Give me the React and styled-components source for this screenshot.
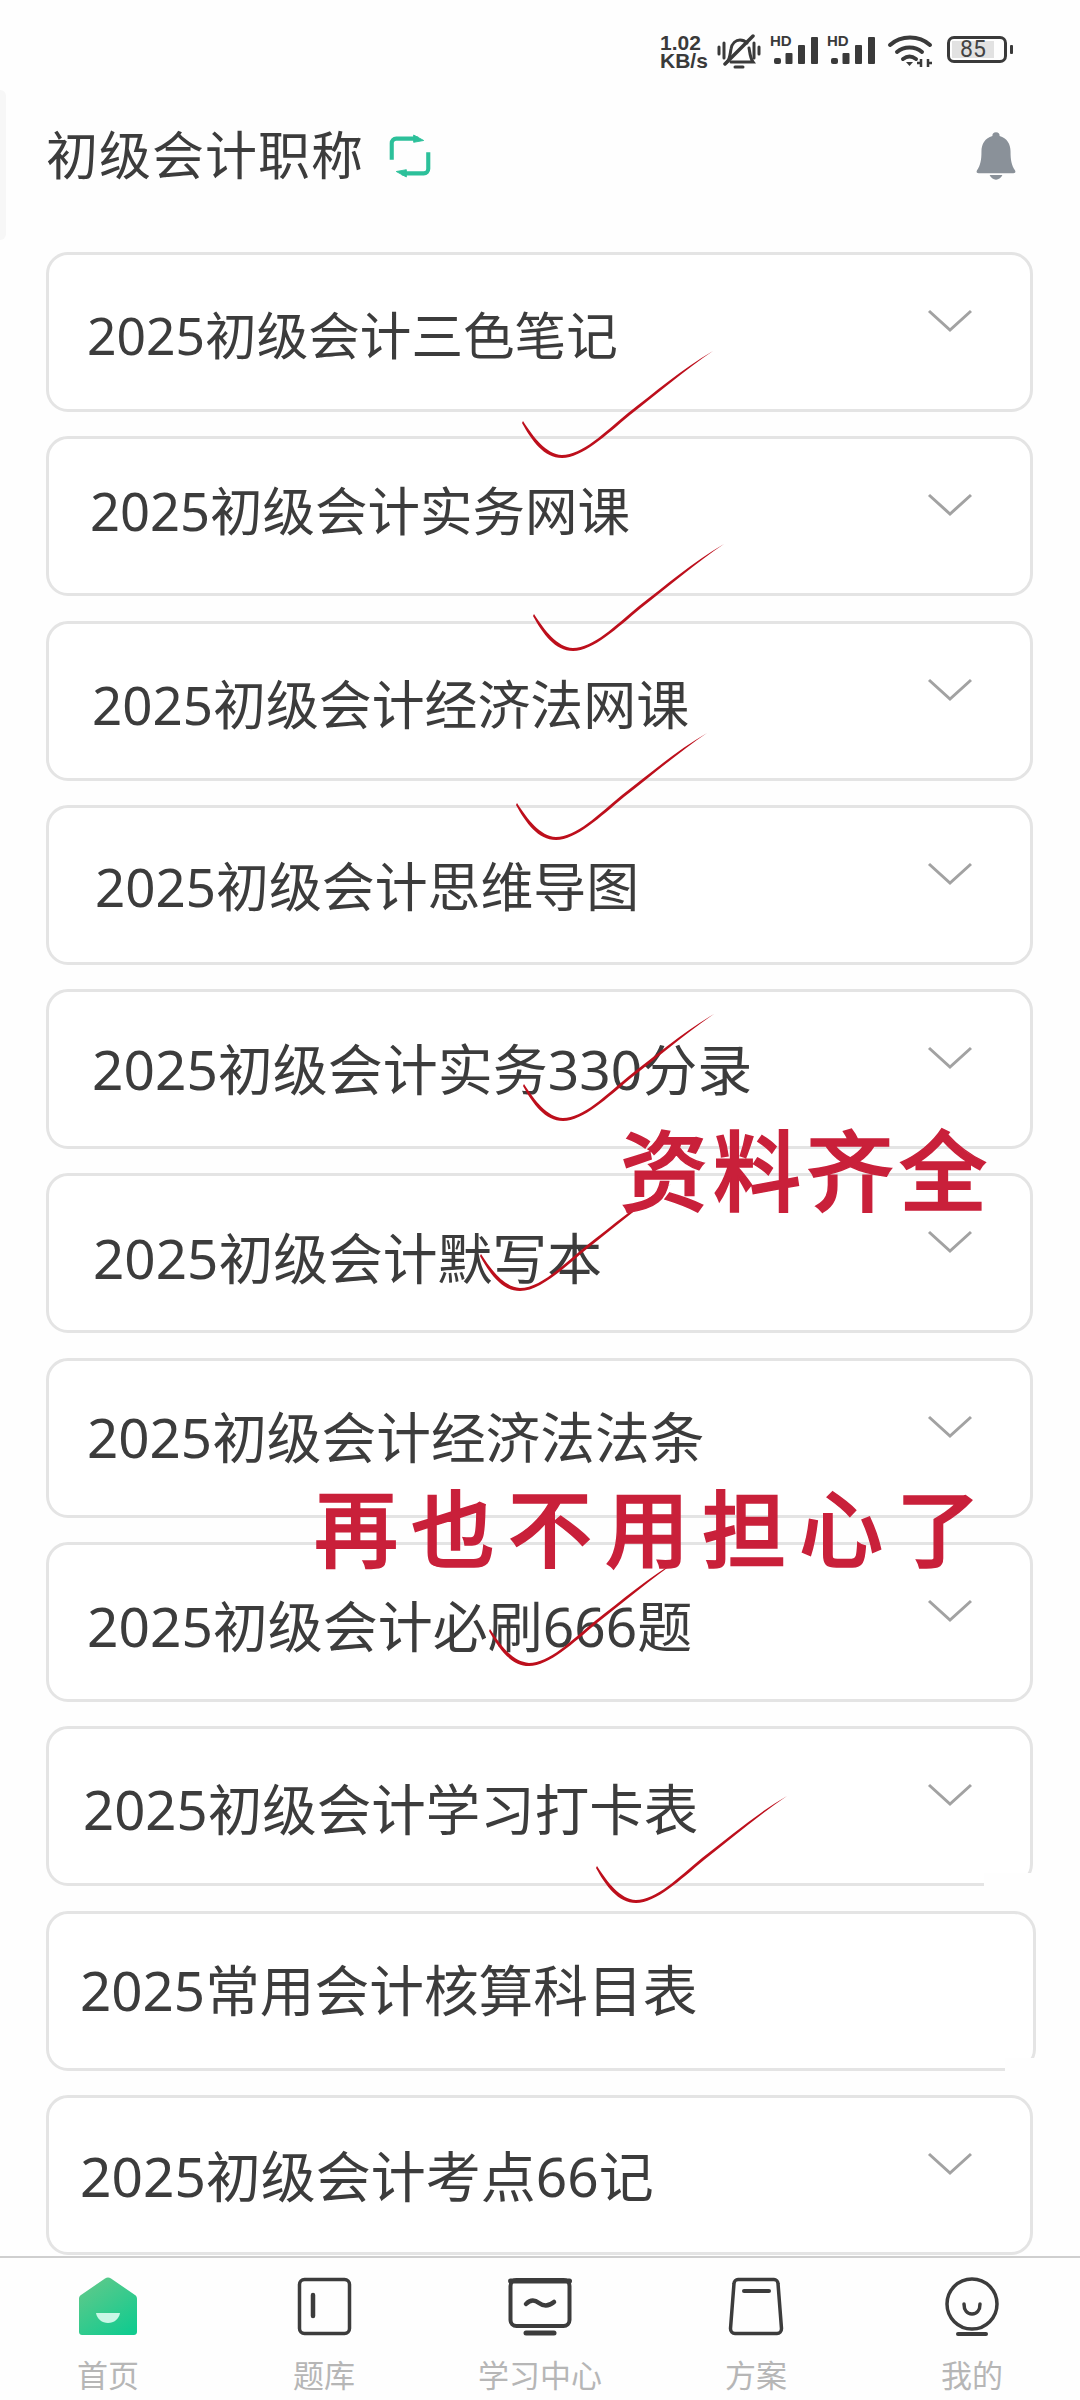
import React from "react";
import styled, { createGlobalStyle } from "styled-components";

const GlobalStyle = createGlobalStyle`
  html, body {
    margin: 0;
    padding: 0;
    background: #fff;
  }
  * {
    box-sizing: border-box;
  }
`;

const Page = styled.div`
  position: relative;
  width: 1080px;
  height: 2400px;
  overflow: hidden;
  display: flex;
  flex-direction: column;
  background: #fefefe;
  color: #3c3c3c;
  font-family: "Noto Sans", "Noto Sans CJK SC", sans-serif;
`;

// Status bar
const StatusBar = styled.div`
  height: 100px;
  padding: 34px 67px 0 0;
  display: flex;
  justify-content: flex-end;
  align-items: flex-start;
`;

const NetSpeed = styled.div`
  width: 57px;
  font-family: "Liberation Sans", sans-serif;
  font-weight: 700;
  font-size: 21px;
  line-height: 18px;
  color: #3a3a3a;
`;

const StatusIcon = styled.svg`
  display: block;
  flex: none;
  margin-left: ${(p) => p.$gap || 0}px;
`;

const Signal = styled.div`
  position: relative;
  flex: none;
  width: 49px;
  height: 32px;
  margin-left: ${(p) => p.$gap}px;
`;

const HdLabel = styled.span`
  position: absolute;
  left: 0;
  top: 0;
  font-family: "Liberation Sans", sans-serif;
  font-weight: 700;
  font-size: 15px;
  line-height: 14px;
  color: #3a3a3a;
`;

const Battery = styled.div`
  display: flex;
  align-items: center;
  margin-left: 14px;
  margin-top: 2px;
`;

const BatteryShell = styled.div`
  width: 60px;
  height: 27px;
  border: 3px solid #3a3a3a;
  border-radius: 7px;
  padding: 2px;
  display: flex;
`;

const BatteryFill = styled.div`
  width: 42px;
  background: #e2e2e2;
  display: flex;
  align-items: center;
  justify-content: center;
  font-family: "Roboto", sans-serif;
  font-size: 23px;
  line-height: 1;
  color: #444;
  white-space: nowrap;
`;

const BatteryNub = styled.div`
  width: 3px;
  height: 9px;
  margin-left: 3px;
  border-radius: 1px;
  background: #3a3a3a;
`;

// Header
const Header = styled.div`
  height: 110px;
  padding: 0 64px 0 46px;
  display: flex;
  align-items: center;
`;

const Title = styled.div`
  font-size: 52px;
  line-height: 1;
  letter-spacing: 1px;
`;

const SwitchIcon = styled.svg`
  display: block;
  margin-left: 25px;
  margin-top: 2px;
`;

const BellIcon = styled.svg`
  display: block;
  margin-left: auto;
  margin-top: 2px;
`;

const EdgeTab = styled.div`
  position: absolute;
  left: 0;
  top: 90px;
  width: 6px;
  height: 150px;
  background: #f7f7f7;
  border-radius: 0 6px 6px 0;
`;

// Course list
const List = styled.div`
  flex: 1;
  margin-top: 42px;
  padding-left: 46px;
  display: flex;
  flex-direction: column;
  gap: 24.3px;
`;

const Row = styled.div`
  position: relative;
  height: 160px;
  width: ${(p) => (p.$wide ? 990 : 987)}px;
  flex: none;
  padding-left: ${(p) => p.$indent}px;
  display: flex;
  justify-content: space-between;
  border: 3px solid #e4e4e4;
  border-radius: 22px;
  background: #fff;

  &::after {
    content: "";
    display: ${(p) => (p.$patch ? "block" : "none")};
    position: absolute;
    right: -4px;
    bottom: -4px;
    width: ${(p) => p.$patch}px;
    height: 14px;
    background: #fefefe;
  }
`;

const RowName = styled.div`
  align-self: center;
  margin-top: ${(p) => p.$shift * 2}px;
  font-size: ${(p) => p.$size}px;
  line-height: 60px;
  white-space: nowrap;
  color: #3c3c3c;
`;

const Chevron = styled.svg`
  display: block;
  flex: none;
  margin: 54px 57px 0 0;
`;

// Pen marks on top of the screenshot
const Tick = styled.svg`
  position: absolute;
  left: ${(p) => p.$x}px;
  top: ${(p) => p.$y}px;
  pointer-events: none;
`;

const Scribble = styled.div`
  position: absolute;
  left: ${(p) => p.$x}px;
  top: ${(p) => p.$y}px;
  font-family: "Noto Sans CJK SC", sans-serif;
  font-weight: 500;
  font-size: ${(p) => p.$size}px;
  letter-spacing: ${(p) => p.$spacing}px;
  line-height: 1;
  color: #c9203a;
  white-space: nowrap;
  -webkit-text-stroke: 1.5px #c9203a;
`;

// Bottom nav
const BottomNav = styled.div`
  height: 144px;
  flex: none;
  display: grid;
  grid-template-columns: repeat(5, 1fr);
  border-top: 2px solid #cfcfcf;
  background: #fefefe;
`;

const Tab = styled.div`
  display: flex;
  flex-direction: column;
  align-items: center;
  padding-top: 17px;
`;

const TabLabel = styled.div`
  margin-top: 16px;
  font-size: 31px;
  line-height: 40px;
  color: #b6b6b6;
`;

const TabIcon = styled.svg`
  display: block;
`;

// each row in the shot was pasted at a slightly different scale
const courses = [
  { name: "2025初级会计三色笔记", indent: 38, shift: 3, size: 51.6 },
  { name: "2025初级会计实务网课", indent: 41, shift: -5, size: 52.5 },
  { name: "2025初级会计经济法网课", indent: 43, shift: 3, size: 52.9 },
  { name: "2025初级会计思维导图", indent: 46, shift: 1, size: 52.9 },
  { name: "2025初级会计实务330分录", indent: 43, shift: 0, size: 55 },
  { name: "2025初级会计默写本", indent: 44, shift: 5, size: 54.8 },
  { name: "2025初级会计经济法法条", indent: 38, shift: -1, size: 54.7 },
  { name: "2025初级会计必刷666题", indent: 38, shift: 4, size: 55 },
  { name: "2025初级会计学习打卡表", indent: 34, shift: 3, size: 54.5, patch: 50 },
  { name: "2025常用会计核算科目表", indent: 31, shift: -1, size: 54.7, patch: 32, wide: true, plain: true },
  { name: "2025初级会计考点66记", indent: 31, shift: 1, size: 55 },
];

// start of each pen tick, taken from the shot
const ticks = [
  [522, 351],
  [533, 544],
  [516, 733],
  [523, 1014],
  [480, 1184],
  [489, 1559],
  [596, 1796],
];

function SignalIcon({ gap }) {
  return (
    <Signal $gap={gap}>
      <HdLabel>HD</HdLabel>
      <StatusIcon width="49" height="32" viewBox="0 0 49 32" fill="#3a3a3a">
        <rect x="4" y="24" width="7" height="6" rx="2" />
        <rect x="15.500" y="19" width="7" height="11" rx="1" />
        <rect x="28" y="11" width="7" height="19" rx="1" />
        <rect x="41" y="3" width="7" height="27" rx="1" />
      </StatusIcon>
    </Signal>
  );
}

function Status() {
  return (
    <StatusBar>
      <NetSpeed>
        1.02
        <br />
        KB/s
      </NetSpeed>
      <StatusIcon width="44" height="36" viewBox="0 0 44 36" fill="none" stroke="#3a3a3a" strokeWidth="3" strokeLinecap="round">
        <path d="M2 13v7M7 9v15M37 9v15M42 13v7" />
        <path d="M10 28c3-3 3-8 4-13 1-6 5-9 9-9 3 0 5 1 7 3M32 14c1 5 1 10 4 14H14" />
        <path d="M8 30 36 2" strokeWidth="3.500" />
        <path d="M18 33h8" strokeWidth="3" />
      </StatusIcon>
      <SignalIcon gap={9} />
      <SignalIcon gap={8} />
      <StatusIcon $gap={11} width="46" height="34" viewBox="0 0 46 34" fill="none" stroke="#3a3a3a" strokeWidth="4" strokeLinecap="round">
        <path d="M3 11c11-10 29-10 40 0" />
        <path d="M10 18c7-6 18-6 25 0" />
        <path d="M16 25c4-3 9-3 13 0" />
        <path d="M19 28h7l-3.500 4z" fill="#3a3a3a" stroke="none" />
        <path d="M34 25v8M41 25v8" strokeWidth="2.500" strokeLinecap="butt" />
        <path d="M30 29h4M41 29h4" strokeWidth="2.500" strokeLinecap="butt" />
      </StatusIcon>
      <Battery>
        <BatteryShell>
          <BatteryFill>85</BatteryFill>
        </BatteryShell>
        <BatteryNub />
      </Battery>
    </StatusBar>
  );
}

function Ticks() {
  return ticks.map(([x, y]) => (
    <Tick key={`${x}-${y}`} $x={x} $y={y} width="192" height="108" viewBox="0 0 192 108">
      <path
        d="M1 70C12 87 24 103 40 104C60 104 82 82 106 62C132 42 160 18 191 0C163 19 135 43 108 64C84 84 60 107 40 107C22 107 10 90 0 72Z"
        fill="#bd0f1c"
      />
    </Tick>
  ));
}

export default function App() {
  return (
    <Page>
      <GlobalStyle />
      <Status />
      <EdgeTab />

      <Header>
        <Title>初级会计职称</Title>
        <SwitchIcon width="42" height="46" viewBox="0 0 46 46" fill="none">
          <path d="M3 27V9c0-3 2-5 5-5h24M43 19v18c0 3-2 5-5 5H14" stroke="#2cc09a" strokeWidth="4.500" />
          <path d="M27 0l11 6-11 2zM19 46 8 40l11-2z" fill="#2cc09a" stroke="#2cc09a" strokeLinejoin="round" />
        </SwitchIcon>
        <BellIcon width="40" height="50" viewBox="0 0 44 52" fill="#8a9199">
          <path d="M18 4a4 4 0 0 1 8 0c8 2 12 9 12 17 0 9 1 15 5 21 1 2 0 3-2 3H3c-2 0-3-1-2-3 4-6 5-12 5-21 0-8 4-15 12-17z" />
          <path d="M15 47h14c-1 3-4 5-7 5s-6-2-7-5z" />
        </BellIcon>
      </Header>

      <List>
        {courses.map((course) => (
          <Row key={course.name} $indent={course.indent} $patch={course.patch} $wide={course.wide}>
            <RowName $shift={course.shift} $size={course.size}>
              {course.name}
            </RowName>
            {!course.plain && (
              <Chevron width="46" height="24" viewBox="0 0 46 24" fill="none" stroke="#a2a2a2" strokeWidth="3">
                <path d="M2 2 23 21 44 2" />
              </Chevron>
            )}
          </Row>
        ))}
      </List>

      <BottomNav>
        <Tab>
          <TabIcon width="64" height="64" viewBox="0 0 64 64">
            <defs>
              <linearGradient id="homeFill" x1="0.1" y1="0" x2="0.8" y2="1">
                <stop offset="0" stopColor="#63c98a" />
                <stop offset="1" stopColor="#12cb8f" />
              </linearGradient>
            </defs>
            <path
              d="M29 3.500c2-1.500 4-1.500 6 0L59 20c1.500 1 2 2 2 4v33c0 2-1.500 3-3 3H6c-1.500 0-3-1-3-3V24c0-2 .5-3 2-4z"
              fill="url(#homeFill)"
            />
            <path d="M20 38h24c-1 6-6 10-12 10s-11-4-12-10z" fill="#c9f7e6" />
          </TabIcon>
          <TabLabel>首页</TabLabel>
        </Tab>
        <Tab>
          <TabIcon width="64" height="64" viewBox="0 0 64 64" fill="none" stroke="#3c3c3c" strokeWidth="3.500" strokeLinecap="round">
            <rect x="7.500" y="4.500" width="50" height="54" rx="5" />
            <path d="M21 20v21" strokeWidth="4.500" />
          </TabIcon>
          <TabLabel>题库</TabLabel>
        </Tab>
        <Tab>
          <TabIcon width="64" height="64" viewBox="0 0 64 64" fill="none" stroke="#3c3c3c" strokeWidth="4" strokeLinecap="round">
            <rect x="2.500" y="5" width="59" height="46" rx="6" />
            <path d="M2.500 6h59" strokeWidth="5" />
            <path d="M18 29c5-5 9-4 13-1s9 4 15-1" strokeWidth="4.500" />
            <path d="M18 58h28" strokeWidth="5" />
          </TabIcon>
          <TabLabel>学习中心</TabLabel>
        </Tab>
        <Tab>
          <TabIcon width="64" height="64" viewBox="0 0 64 64" fill="none" stroke="#3c3c3c" strokeWidth="3.500" strokeLinecap="round">
            <path d="M14 4.500h36c2 0 4 2 4 4l3.500 45c0 3-2 5-4.500 5H11c-2.500 0-4.500-2-4.500-5L10 8.500c0-2 2-4 4-4z" />
            <path d="M20 16h25" strokeWidth="4" />
          </TabIcon>
          <TabLabel>方案</TabLabel>
        </Tab>
        <Tab>
          <TabIcon width="64" height="64" viewBox="0 0 64 64" fill="none" stroke="#3c3c3c" strokeWidth="3.500" strokeLinecap="round">
            <circle cx="32" cy="29" r="25" />
            <path d="M24 29c0 6 3 10 8 10s8-4 8-10" />
            <path d="M18 59h28" strokeWidth="4" />
          </TabIcon>
          <TabLabel>我的</TabLabel>
        </Tab>
      </BottomNav>

      <Ticks />
      <Scribble $x={620} $y={1122} $size={88} $spacing={5}>
        资料齐全
      </Scribble>
      <Scribble $x={314} $y={1483} $size={84} $spacing={13}>
        再也不用担心了
      </Scribble>
    </Page>
  );
}
